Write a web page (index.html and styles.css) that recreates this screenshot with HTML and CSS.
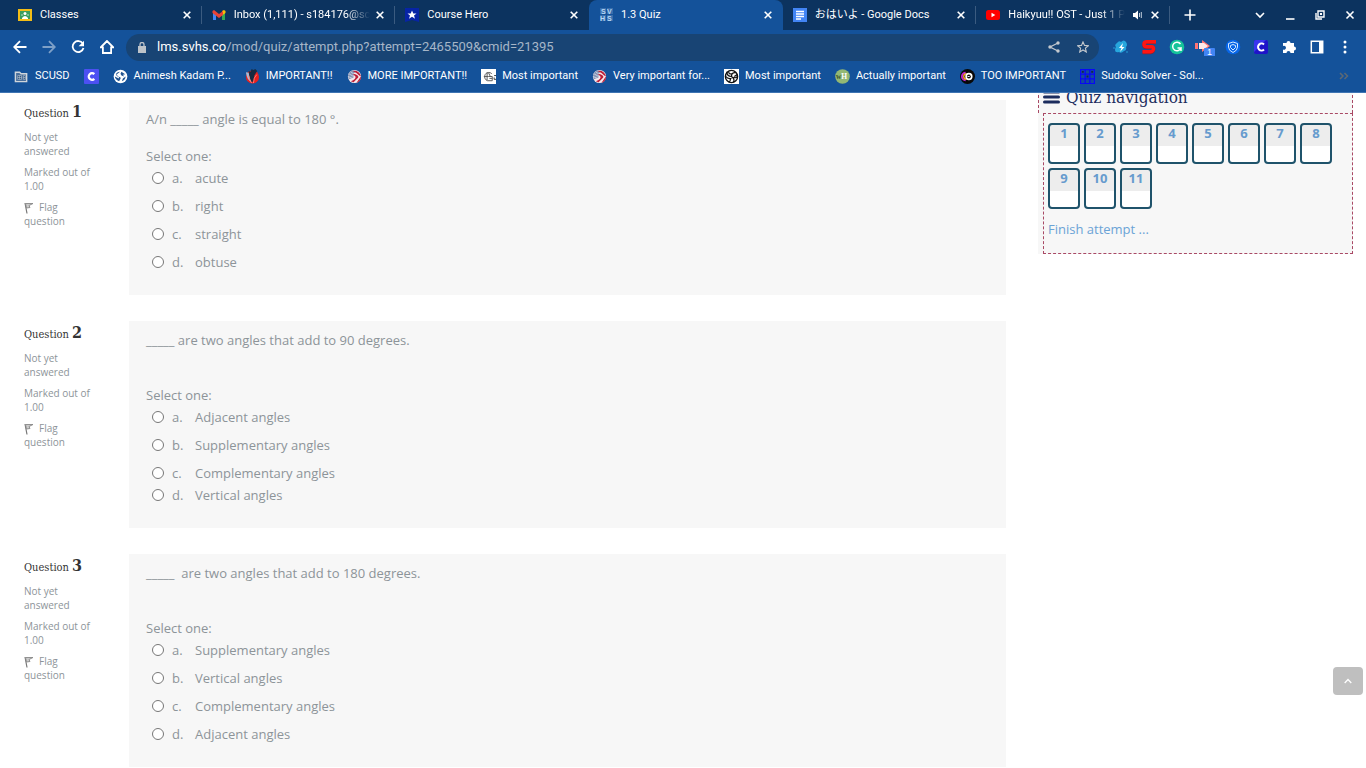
FILE: index.html
```html
<!DOCTYPE html>
<html lang="en">
<head>
<meta charset="utf-8">
<title>1.3 Quiz</title>
<link rel="stylesheet" href="styles.css">
</head>
<body>
<header class="browser">
  <div class="tabstrip">
    <div class="tabs">
      <div class="tab">
        <svg class="favicon" viewBox="0 0 14 14"><path d="M0 1h14v12H0z" fill="#f4bd16"/><path d="M2 3h10v8H2z" fill="#3a9d5c"/><circle cx="7" cy="5.500" r="1.500" fill="#fff"/><path d="M4 10q3-4 6 0v1H4z" fill="#fff"/><circle cx="4" cy="7" r="1" fill="#8bc9a6"/><circle cx="10" cy="7" r="1" fill="#8bc9a6"/></svg>
        <span class="tab-title">Classes</span>
        <button class="close" aria-label="Close Classes"><svg viewBox="0 0 8 8"><path d="M.7.7l6.6 6.6M7.3.7L.7 7.3"/></svg></button>
      </div>
      <div class="tab">
        <svg class="favicon" viewBox="0 0 14 14"><path d="M1 12V3l3 2.500V12z" fill="#4285f4"/><path d="M10 12V5.500L13 3v9z" fill="#34a853"/><path d="M10 3l2-1 1.500 1v2L10 7.500z" fill="#fbbc04"/><path d="M.5 3L2 2l5 4 4-3v4L7 10 .5 5z" fill="#ea4335"/></svg>
        <span class="tab-title fade">Inbox (1,111) - s184176@sc</span>
        <button class="close" aria-label="Close Inbox"><svg viewBox="0 0 8 8"><path d="M.7.7l6.6 6.6M7.3.7L.7 7.3"/></svg></button>
      </div>
      <div class="tab before-active">
        <svg class="favicon" viewBox="0 0 14 14"><path d="M0 0h14v14l-7-2-7 2z" fill="#0724a5"/><path d="M7 2.500l1.300 3h3.200L9 7.500l1 3.200-3-1.900-3 1.900 1-3.200-2.500-2h3.200z" fill="#fff"/></svg>
        <span class="tab-title">Course Hero</span>
        <button class="close" aria-label="Close Course Hero"><svg viewBox="0 0 8 8"><path d="M.7.7l6.6 6.6M7.3.7L.7 7.3"/></svg></button>
      </div>
      <div class="tab active">
        <svg class="favicon" viewBox="0 0 14 14"><g fill="#376fae"><rect x="1" width="6" height="6"/><rect x="8" width="6" height="6"/><rect x="1" y="7" width="6" height="6"/><rect x="8" y="7" width="6" height="6"/></g><g class="letters" font-size="7" fill="#b9d8f4"><text x="2" y="6">S</text><text x="8" y="6">V</text><text x="1" y="13">H</text><text x="8" y="13">S</text></g></svg>
        <span class="tab-title">1.3 Quiz</span>
        <button class="close" aria-label="Close 1.3 Quiz"><svg viewBox="0 0 8 8"><path d="M.7.7l6.6 6.6M7.3.7L.7 7.3"/></svg></button>
      </div>
      <div class="tab">
        <svg class="favicon" viewBox="0 0 14 14"><rect width="14" height="14" fill="#4285f4"/><path d="M3 3.500h8M3 6h8M3 8.500h8M3 11h5" stroke="#fff" stroke-width="1.400"/></svg>
        <span class="tab-title">おはいよ - Google Docs</span>
        <button class="close" aria-label="Close Google Docs"><svg viewBox="0 0 8 8"><path d="M.7.7l6.6 6.6M7.3.7L.7 7.3"/></svg></button>
      </div>
      <div class="tab">
        <svg class="favicon" viewBox="0 0 14 14"><rect y="2" width="14" height="10" rx="2.500" fill="#f00"/><path d="M5.500 4.800v4.400L9.300 7z" fill="#fff"/></svg>
        <span class="tab-title fade">Haikyuu!! OST - Just 1 P</span>
        <svg class="sound" viewBox="0 0 9 10"><path d="M0 3h2l3-2.500v9L2 7H0z" fill="#fff"/><path d="M6.500 3v4M8.300 2v6" stroke="#c3cfdd" fill="none"/></svg>
        <button class="close" aria-label="Close Haikyuu"><svg viewBox="0 0 8 8"><path d="M.7.7l6.6 6.6M7.3.7L.7 7.3"/></svg></button>
      </div>
    </div>
    <button class="new-tab" aria-label="New tab"><svg viewBox="0 0 12 12"><path d="M6 .5v11M.5 6h11"/></svg></button>
    <div class="window-controls">
      <button aria-label="Search tabs"><svg viewBox="0 0 10 10"><path d="M1 3l4 4 4-4"/></svg></button>
      <button aria-label="Minimize"><svg viewBox="0 0 10 10"><path d="M1 9h8.500"/></svg></button>
      <button aria-label="Restore"><svg viewBox="0 0 10 10"><path d="M3 1h6v6H3zM1 3v6h6" stroke-width="1.400"/><path d="M5 3h2v2H5z" fill="#fff" stroke="none"/></svg></button>
      <button aria-label="Close window"><svg viewBox="0 0 10 10"><path d="M1.500 1.500l7 7M8.500 1.500l-7 7"/></svg></button>
    </div>
  </div>

  <div class="toolbar">
    <div class="nav-buttons">
      <button aria-label="Back"><svg viewBox="0 0 14 14"><path d="M13.500 7H1.500M7 1.200L1.200 7 7 12.800"/></svg></button>
      <button class="dim" aria-label="Forward"><svg viewBox="0 0 14 14"><path d="M.5 7h12M7 1.200L12.800 7 7 12.800"/></svg></button>
      <button aria-label="Reload"><svg viewBox="0 0 14 14"><path d="M11.800 3.500A5.500 5.500 0 1 0 12.500 8"/><path d="M13 .8v5.400H7.600z" fill="#fff" stroke="none"/></svg></button>
      <button aria-label="Home"><svg viewBox="0 0 14 14"><path d="M7 1L.8 7.300h2.100V13h8.200V7.300h2.100z"/></svg></button>
    </div>
    <div class="omnibox">
      <svg class="lock" viewBox="0 0 8 11"><path d="M0 4h8v7H0z" fill="#bdc3c9"/><path d="M2 4V2.500a2 2 0 0 1 4 0V4" fill="none" stroke="#bdc3c9" stroke-width="1.300"/></svg>
      <div class="url" role="textbox" contenteditable="true" spellcheck="false" aria-label="Address">lms.svhs.co<span class="path">/mod/quiz/attempt.php?attempt=2465509&amp;cmid=21395</span></div>
      <button aria-label="Share"><svg viewBox="0 0 12 12"><path d="M10 2L2 6l8 4" fill="none" stroke="#c4c9ce" stroke-width="1.300"/><g fill="#c4c9ce"><circle cx="10" cy="2" r="1.700"/><circle cx="2" cy="6" r="1.700"/><circle cx="10" cy="10" r="1.700"/></g></svg></button>
      <button aria-label="Bookmark"><svg viewBox="0 0 12 12"><path d="M6 .9l1.500 3.500 3.900.3-3 2.500.9 3.800L6 9l-3.300 2 .9-3.800-3-2.500 3.900-.3z" fill="none" stroke="#c4c9ce" stroke-width="1.100"/></svg></button>
    </div>
    <div class="extensions">
      <button aria-label="Flash extension"><svg viewBox="0 0 16 16"><path d="M4 4q2-3 4-1 3-3 5 0t0 5q1 3-2 4-3 3-5 1-4 1-4-2 0-2 1-3-2-2 1-4z" fill="#27a6dd"/><circle cx="1" cy="9" r=".8" fill="#27a6dd"/><circle cx="14" cy="13" r=".8" fill="#27a6dd"/><path d="M10 4L6 9h2.500L7 13l4.500-5H9z" fill="#fff"/></svg></button>
      <button aria-label="S extension"><svg viewBox="0 0 16 16"><path d="M15 3.500H6Q3 3.500 3 6t3 2.500h4.500q2.500 0 2 2.300T9.500 13.500H1.500" fill="none" stroke="#7d2438" stroke-width="3.600"/><path d="M15 2.800H6Q3 2.800 3 5.300t3 2.500h4.500q2.500 0 2 2.300t-3 2.700H1.500" fill="none" stroke="#ff1512" stroke-width="3.400"/></svg></button>
      <button aria-label="Grammar extension"><svg viewBox="0 0 16 16"><circle cx="8" cy="8" r="7.300" fill="#15c39a"/><path d="M11.500 5A4.300 4.300 0 1 0 12 9H8.500M12 9v3" fill="none" stroke="#fff" stroke-width="1.500"/></svg></button>
      <button aria-label="Arrow extension"><svg viewBox="0 0 22 18"><path d="M1 5h3v6H1z" fill="#ff7474"/><path d="M5 5h3V2l8 6-8 6v-3H5z" fill="#ff7474"/><path d="M5 5h5l4 3-4 3H5z" fill="#ffe9e9"/><rect x="10" y="10" width="11" height="9" rx="1" fill="#4285f4"/><text x="13" y="17" font-size="9" fill="#fff">1</text></svg></button>
      <button aria-label="Shield extension"><svg viewBox="0 0 16 16"><circle cx="8" cy="8" r="7.300" fill="#0866e8"/><path d="M8 3l4.500 1.500V8q0 3.500-4.500 5.500Q3.500 11.500 3.500 8V4.500zM8 5.500l2.500 1v2L8 11 5.500 8.500v-2z" fill="none" stroke="#d4eaff" stroke-width="1"/></svg></button>
      <button aria-label="C extension"><svg viewBox="0 0 16 16"><rect x="1" y="1" width="14" height="14" rx="2" fill="#1f13c9"/><path d="M1 3q0-2 2-2h10L1 13z" fill="#3a35ee"/><path d="M11 5.500a3.500 3.500 0 1 0 0 5" fill="none" stroke="#fff" stroke-width="2"/></svg></button>
      <button aria-label="Extensions"><svg viewBox="0 0 16 16"><path d="M2 4h3.500a2 2 0 1 1 4 0H13v3.500a2 2 0 1 1 0 4V14H9.500a2 2 0 1 0-4 0H2v-3.500a2 2 0 1 0 0-3.500z" fill="#fff"/></svg></button>
      <button aria-label="Side panel"><svg viewBox="0 0 16 16"><path d="M2.300 2.300h11.400v11.400H2.300z" fill="none" stroke="#fff" stroke-width="1.500"/><path d="M10 2.300h4v11.400h-4z" fill="#fff"/></svg></button>
      <button aria-label="Menu"><svg viewBox="0 0 16 16"><g fill="#fff"><circle cx="8" cy="3" r="1.500"/><circle cx="8" cy="8" r="1.500"/><circle cx="8" cy="13" r="1.500"/></g></svg></button>
    </div>
  </div>

  <nav class="bookmarks" aria-label="Bookmarks">
    <a href="#"><svg viewBox="0 0 16 16"><path d="M1.500 3.500h4.500l1.500 1.500h6v8.500h-12z" fill="#496f9c" stroke="#cfd5db" stroke-width="1.500"/><path d="M4 7h4v4H4zM10 7h2v4h-2zM6 7v4M4 9h4M10 9h2" fill="#184474" stroke="#cfd5db" stroke-width=".6"/></svg>SCUSD</a>
    <a href="#" aria-label="C"><svg viewBox="0 0 16 16"><rect width="16" height="16" rx="1" fill="#4c50f2"/><path d="M11 5.500a3.500 3.500 0 1 0 0 5" fill="none" stroke="#fff" stroke-width="2.400"/></svg></a>
    <a href="#"><svg viewBox="0 0 16 16"><circle cx="8" cy="8" r="7.300" fill="#fff"/><path d="M7.500 3Q4 3 3 6q1 2 4 2.500 2 .5 1 2L6.500 13Q2 11 2 8l2 1 2.500 1L6 8 3.500 6zM9 3l4 2.500-2.500.5L12 8l-3-1-1-2zM13.500 8Q13 12 9.500 13l1-3z" fill="#215390"/></svg>Animesh Kadam P...</a>
    <a href="#"><svg viewBox="0 0 16 16"><circle cx="8" cy="8.500" r="7" fill="#e9201e"/><path d="M1 3.500L4 4l3 10q-5-2-6-10.500z" fill="#a9bad3"/><path d="M4 2l2 1 1-3 2 1 2-1 2 2-3 5-1 6-2 1q-3-5-3-12z" fill="#182b40"/><path d="M4 7q1 5 3 8M12.500 6Q9 9 9 15" fill="none" stroke="#ff7f79"/></svg>IMPORTANT!!</a>
    <a href="#"><svg viewBox="0 0 16 16"><use href="#volleyball"/></svg>MORE IMPORTANT!!</a>
    <a href="#"><svg viewBox="0 0 16 16"><rect width="16" height="16" fill="#fff"/><path d="M11.500 5A4.500 4.500 0 1 0 7 12.500h5V8H8M3 8h5M6.500 3.500v8.500M8 4l2 4M9 10h3" fill="none" stroke="#555"/><path d="M14 7h2M14 9v2h2" fill="none" stroke="#333"/></svg>Most important</a>
    <a href="#"><svg viewBox="0 0 16 16"><g id="volleyball"><circle cx="8" cy="8" r="7" fill="#f7e8eb"/><path d="M5 1.600Q2 3 1 7l1 4 5-2V5l3-3z" fill="#8494b5"/><path d="M2 5l5 3M4 3l4 3M1 8l5 2" stroke="#d8deea" stroke-width=".8"/><path d="M6 2q7-1 9 6l-2-1Q11 4 6 2zM6 5q7 1 6 4l-5 5-3-1q6-2 5-5zM15 8q0 5-5 7l4-6z" fill="#bd1e38"/></g></svg>Very important for...</a>
    <a href="#"><svg viewBox="0 0 16 16"><rect width="16" height="16" fill="#fff"/><circle cx="8" cy="8" r="6.500" fill="none" stroke="#111" stroke-width="1.500"/><path d="M8 8Q3 8 3 3M8 8q0-5 5-4M8 8q4 3 2 6M2 8q2 3 6 2M5 3q0 3 4 2M7 10q0 3-2 4M11 8l3-2M10 9q3 1 4-1" fill="none" stroke="#111" stroke-width="1.300"/></svg>Most important</a>
    <a href="#"><svg viewBox="0 0 16 16"><circle cx="8" cy="8" r="7.800" fill="#93b874"/><text class="wikihow" x="1" y="11" font-size="8" fill="#39552a">w<tspan fill="#fff">H</tspan></text></svg>Actually important</a>
    <a href="#"><svg viewBox="0 0 16 16"><circle cx="8" cy="8" r="8" fill="#080808"/><path d="M6 4a4 4 0 0 0 0 8" fill="none" stroke="#c225d1" stroke-width="2"/><path d="M7 5a3 3 0 0 0 0 6" fill="none" stroke="#f6a51d" stroke-width="1.500"/><circle cx="9.500" cy="8" r="3" fill="none" stroke="#fff" stroke-width="1.800"/><path d="M8 8h2l1-1" stroke="#fff" fill="none"/></svg>TOO IMPORTANT</a>
    <a href="#"><svg viewBox="0 0 16 16"><path d="M.5.5h15v15H.5zM5.500 0v16M10.500 0v16M0 5.500h16M0 10.500h16" fill="#144b9e" stroke="#0808f5" stroke-width="1.400"/><path d="M2 2h2v2H2zM12 2h2v2h-2zM7 7h2v2H7z" fill="#12264b"/></svg>Sudoku Solver - Sol...</a>
    <button class="more" aria-label="More bookmarks"><svg viewBox="0 0 10 8"><path d="M1 1l3 3-3 3M5.500 1l3 3-3 3" fill="none" stroke="#5e6974" stroke-width="1.500"/></svg></button>
  </nav>
</header>

<main class="page">
  <div class="questions">
    <section class="question">
      <aside class="info">
        <h3>Question <b>1</b></h3>
        <p>Not yet answered</p>
        <p>Marked out of 1.00</p>
        <a class="flag" href="#"><svg viewBox="0 0 10 12"><path d="M1 1l2 10.500" fill="none" stroke="#777" stroke-width="1.200"/><path d="M1.500 1.500H9L5 3.500 6 5.500 2.500 6z" fill="#ccc" stroke="#888" stroke-width=".9"/></svg>Flag question</a>
      </aside>
      <div class="formulation">
        <p class="prompt">A/n _____ angle is equal to 180 °.</p>
        <fieldset>
          <legend>Select one:</legend>
          <label><input type="radio" name="q1"><span class="letter">a.</span>acute</label>
          <label><input type="radio" name="q1"><span class="letter">b.</span>right</label>
          <label><input type="radio" name="q1"><span class="letter">c.</span>straight</label>
          <label><input type="radio" name="q1"><span class="letter">d.</span>obtuse</label>
        </fieldset>
      </div>
    </section>
    <section class="question">
      <aside class="info">
        <h3>Question <b>2</b></h3>
        <p>Not yet answered</p>
        <p>Marked out of 1.00</p>
        <a class="flag" href="#"><svg viewBox="0 0 10 12"><path d="M1 1l2 10.500" fill="none" stroke="#777" stroke-width="1.200"/><path d="M1.500 1.500H9L5 3.500 6 5.500 2.500 6z" fill="#ccc" stroke="#888" stroke-width=".9"/></svg>Flag question</a>
      </aside>
      <div class="formulation">
        <p class="prompt spaced">_____ are two angles that add to 90 degrees.</p>
        <fieldset>
          <legend>Select one:</legend>
          <label><input type="radio" name="q2"><span class="letter">a.</span>Adjacent angles</label>
          <label><input type="radio" name="q2"><span class="letter">b.</span>Supplementary angles</label>
          <label class="tight"><input type="radio" name="q2"><span class="letter">c.</span>Complementary angles</label>
          <label><input type="radio" name="q2"><span class="letter">d.</span>Vertical angles</label>
        </fieldset>
      </div>
    </section>
    <section class="question">
      <aside class="info">
        <h3>Question <b>3</b></h3>
        <p>Not yet answered</p>
        <p>Marked out of 1.00</p>
        <a class="flag" href="#"><svg viewBox="0 0 10 12"><path d="M1 1l2 10.500" fill="none" stroke="#777" stroke-width="1.200"/><path d="M1.500 1.500H9L5 3.500 6 5.500 2.500 6z" fill="#ccc" stroke="#888" stroke-width=".9"/></svg>Flag question</a>
      </aside>
      <div class="formulation">
        <p class="prompt spaced">_____&nbsp; are two angles that add to 180 degrees.</p>
        <fieldset>
          <legend>Select one:</legend>
          <label><input type="radio" name="q3"><span class="letter">a.</span>Supplementary angles</label>
          <label><input type="radio" name="q3"><span class="letter">b.</span>Vertical angles</label>
          <label><input type="radio" name="q3"><span class="letter">c.</span>Complementary angles</label>
          <label><input type="radio" name="q3"><span class="letter">d.</span>Adjacent angles</label>
        </fieldset>
      </div>
    </section>
  </div>

  <aside class="quiz-nav">
    <h2><svg viewBox="0 0 17 14"><path d="M1.500 2h14M1.500 7h14M1.500 12h14" stroke="#1c2d5e" stroke-width="3" stroke-linecap="round"/></svg>Quiz navigation</h2>
    <div class="nav-content">
      <div class="numbers">
        <a href="#">1</a><a href="#">2</a><a href="#">3</a><a href="#">4</a><a href="#">5</a><a href="#">6</a><a href="#">7</a><a href="#">8</a><a href="#">9</a><a href="#">10</a><a href="#">11</a>
      </div>
      <a class="finish" href="#">Finish attempt ...</a>
    </div>
  </aside>
  <button class="to-top" aria-label="Back to top"><svg viewBox="0 0 8 6"><path d="M.7 5L4 1.500 7.300 5" fill="none" stroke="#fff" stroke-width="1.300"/></svg></button>
</main>
</body>
</html>
```
FILE: styles.css
```css
* { box-sizing: border-box; }

body {
  margin: 0;
  height: 100vh;
  overflow: hidden;
  display: flex;
  flex-direction: column;
  background: #fff;
  color: #8d9499;
  font: 13px/22px "Open Sans", "Noto Sans", sans-serif;
}

a { color: inherit; text-decoration: none; }
button {
  display: grid;
  place-items: center;
  padding: 0;
  border: 0;
  background: none;
}
h2, h3, p { margin: 0; font-weight: 400; }
svg { display: block; flex: none; }

/* Browser window */
.browser {
  flex: none;
  background: #14529a;
  border-bottom: 1px solid #3f75b3;
  color: #fff;
  font: 11px/16px Roboto, "Noto Sans CJK JP", sans-serif;
}
.tabstrip {
  display: flex;
  height: 30px;
  padding-left: 8px;
  background: #0c335f;
}
.tabs { display: flex; flex: 1; min-width: 0; }
.tab {
  flex: 1 1 0;
  min-width: 0;
  display: flex;
  align-items: center;
  padding: 0 10px;
  background: linear-gradient(#3b5b80, #3b5b80) right 6px / 1px 18px no-repeat;
}
.tab.before-active { background: none; }
.tab.active { background: #14529a; border-radius: 8px 8px 0 0; }
.favicon { width: 14px; height: 14px; margin-right: 8px; }
.letters { font-family: "Liberation Sans", sans-serif; font-weight: 700; }
.tab-title { flex: 1; min-width: 0; white-space: nowrap; }
.fade { mask-image: linear-gradient(to right, #000 calc(100% - 24px), transparent); }
.close { width: 10px; height: 16px; margin-left: 5px; }
.close svg { width: 8px; height: 8px; }
.sound { width: 9px; height: 10px; margin: 0 3px 0 8px; }
.tabstrip button svg { fill: none; stroke: #fff; stroke-width: 1.6; }
.new-tab { width: 40px; }
.new-tab svg { width: 12px; height: 12px; }
.window-controls { display: flex; gap: 10px; padding: 0 6px 0 40px; }
.window-controls button { width: 20px; }
.window-controls svg { width: 10px; height: 10px; }

.toolbar { display: flex; align-items: center; height: 34px; padding-left: 13px; }
.nav-buttons { display: flex; gap: 15px; margin-right: 12px; }
.nav-buttons svg { width: 14px; height: 14px; fill: none; stroke: #fff; stroke-width: 1.8; }
.nav-buttons .dim { opacity: .45; }
.omnibox {
  flex: 1;
  display: flex;
  align-items: center;
  gap: 17px;
  height: 27px;
  padding: 0 10px 0 12px;
  border-radius: 14px;
  background: #184474;
}
.omnibox svg { width: 12px; height: 12px; }
.omnibox .lock { width: 8px; height: 11px; margin-right: -6px; }
.url { flex: 1; font-size: 13px; white-space: nowrap; outline: none; }
.path { color: #a6b6c8; }
.extensions { display: flex; gap: 6px; padding: 0 10px 0 11px; }
.extensions button { width: 22px; height: 22px; }
.extensions svg { width: 16px; height: 16px; }
.extensions button:nth-child(4) svg { width: 22px; height: 18px; }

.bookmarks { display: flex; align-items: center; gap: 14px; height: 28px; padding: 0 17px 4px 14px; }
.bookmarks a { display: flex; align-items: center; gap: 6px; white-space: nowrap; }
.bookmarks svg { width: 15px; height: 15px; }
.wikihow { font-family: "Liberation Serif", serif; font-weight: 700; }
.more { margin-left: auto; }
.bookmarks .more svg { width: 10px; height: 8px; }

/* Quiz page */
.page {
  flex: 1;
  min-height: 0;
  overflow: hidden;
  display: grid;
  grid-template-columns: 1fr 315px;
  gap: 32px;
  align-items: start;
  padding-right: 13px;
}
.questions { display: flex; flex-direction: column; gap: 26px; padding-top: 7px; }
.question { display: grid; grid-template-columns: 105px 1fr; padding-left: 24px; }
.info { padding: 2px 32px 0 0; font-size: 10px; line-height: 14px; }
.info h3 {
  margin-bottom: 4px;
  color: #333;
  font: 11px/24px "Roboto Slab", "DejaVu Serif Condensed", "DejaVu Serif", serif;
  white-space: nowrap;
}
.info b { font-size: 16px; line-height: 16px; }
.info p { margin-bottom: 7px; }
.flag svg { display: inline-block; width: 10px; height: 12px; margin-right: 5px; vertical-align: -3px; }
.formulation { padding: 8px 17px 22px; background: #f7f7f7; }
.prompt { margin-bottom: 15px; }
.prompt.spaced { margin-bottom: 33px; }
fieldset { margin: 0; padding: 0; border: 0; }
legend { padding: 0; }
fieldset label { display: flex; align-items: center; margin-bottom: 6px; }
fieldset label.tight, fieldset label:last-child { margin-bottom: 0; }
fieldset input { width: 12px; height: 12px; margin: 0 8px 0 6px; }
.letter { width: 23px; }

.quiz-nav { margin-top: -8px; background: #f7f7f7; }
.quiz-nav h2 {
  display: flex;
  align-items: center;
  gap: 6px;
  height: 28px;
  padding: 0 0 5px 4px;
  border: dashed #a94965;
  border-width: 0 1px;
  color: #1c2d5e;
  font: 17px/24px "Roboto Slab", "DejaVu Serif Condensed", "DejaVu Serif", serif;
}
.quiz-nav h2 svg { width: 17px; height: 14px; }
.nav-content { margin-left: 5px; padding: 9px 4px 13px; border: 1px dashed #a94965; }
.numbers { display: flex; flex-wrap: wrap; gap: 4px; }
.numbers a {
  width: 32px;
  height: 41px;
  border: 2px solid #1f536b;
  border-radius: 4px;
  background: linear-gradient(#ededed 21px, #fff 21px);
  color: #669bce;
  font-weight: 700;
  line-height: 17px;
  text-align: center;
}
.finish { display: block; margin-top: 9px; color: #6ba3d6; }
.to-top {
  position: fixed;
  right: 3px;
  bottom: 73px;
  width: 30px;
  height: 28px;
  border-radius: 4px;
  background: #bfbfbf;
}
.to-top svg { width: 8px; height: 6px; }
```
